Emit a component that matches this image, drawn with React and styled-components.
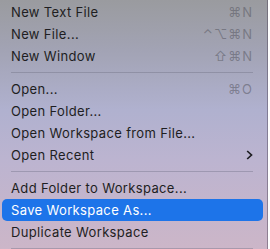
import React from 'react';
import styled, { createGlobalStyle } from 'styled-components';

const Global = createGlobalStyle`
  html, body { margin: 0; padding: 0; }
  body {
    width: 270px;
    height: 249px;
    overflow: hidden;
    font-family: Inter, "Noto Sans", "Liberation Sans", sans-serif;
  }
`;

const Menu = styled.div`
  width: 268px;
  height: 249px;
  box-sizing: border-box;
  padding: 1px 4px 0 2px;
  border-right: 1px solid rgba(70, 60, 80, 0.45);
  background: linear-gradient(
    180deg,
    #9a9b9f 0px,
    #a2a3b4 50px,
    #b0b1cf 110px,
    #bcb4d0 160px,
    #ccb6c8 249px
  );
  display: flex;
  flex-direction: column;
`;

const Item = styled.div`
  height: 22px;
  flex-shrink: 0;
  display: flex;
  align-items: center;
  justify-content: space-between;
  padding: 0 10px 0 9px;
  border-radius: 5px;
  font-size: 13px;
  letter-spacing: 0.35px;
  color: ${p => (p.$active ? '#ffffff' : '#1e1e22')};
  background: ${p => (p.$active ? '#1d74e9' : 'transparent')};
`;

const Keys = styled.span`
  color: rgba(80, 80, 90, 0.5);
  font-size: 13px;
  letter-spacing: 1px;
`;

const Sep = styled.div`
  height: 1px;
  flex-shrink: 0;
  margin: 5px 10px 5px 9px;
  background: rgba(100, 100, 120, 0.35);
`;

const Chevron = () => (
  <svg width="7" height="10" viewBox="0 0 7 10">
    <path d="M1.2 1 L5.5 5 L1.2 9" fill="none" stroke="#1e1e22" strokeWidth="1.7" />
  </svg>
);

const groups = [
  [
    { label: 'New Text File', keys: '⌘N' },
    { label: 'New File...', keys: '⌃⌥⌘N' },
    { label: 'New Window', keys: '⇧⌘N' },
  ],
  [
    { label: 'Open...', keys: '⌘O' },
    { label: 'Open Folder...' },
    { label: 'Open Workspace from File...' },
    { label: 'Open Recent', sub: true },
  ],
  [
    { label: 'Add Folder to Workspace...' },
    { label: 'Save Workspace As...', active: true },
    { label: 'Duplicate Workspace' },
  ],
];

export default function App() {
  return (
    <>
      <Global />
      <Menu>
        {groups.map((g, i) => (
          <React.Fragment key={i}>
            {g.map(it => (
              <Item key={it.label} $active={it.active}>
                <span>{it.label}</span>
                {it.keys && <Keys>{it.keys}</Keys>}
                {it.sub && <Chevron />}
              </Item>
            ))}
            <Sep />
          </React.Fragment>
        ))}
      </Menu>
    </>
  );
}
